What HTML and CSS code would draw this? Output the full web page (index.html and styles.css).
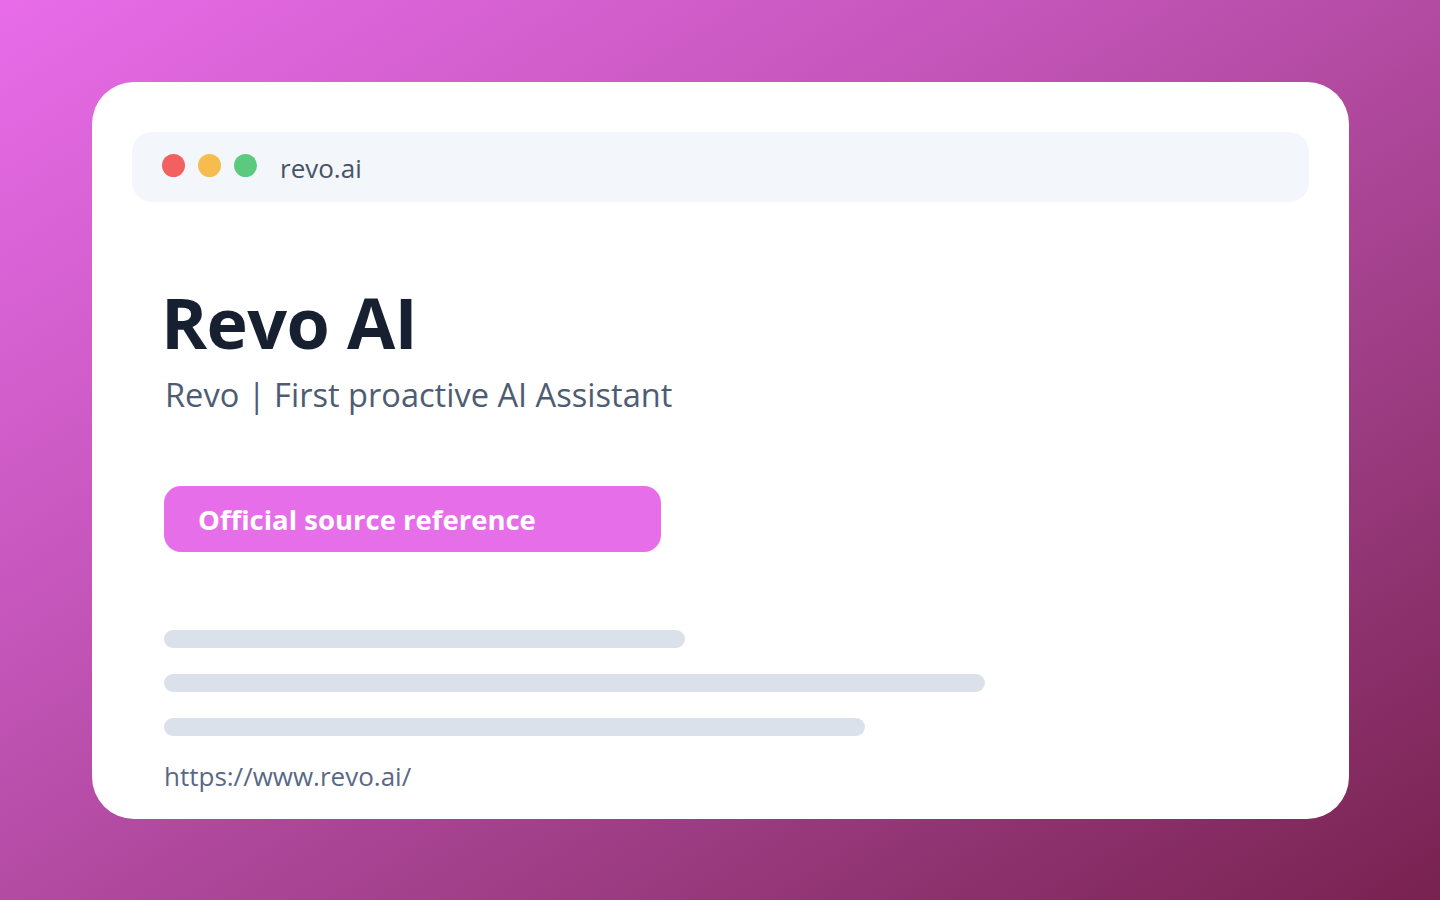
FILE: index.html
```html
<!DOCTYPE html>
<html lang="en">
<head>
<meta charset="utf-8">
<title>Revo AI</title>
<link rel="stylesheet" href="styles.css">
</head>
<body>
<main class="stage">
  <section class="card">
    <header class="bar">
      <div class="dots">
        <span class="dot red"></span>
        <span class="dot yellow"></span>
        <span class="dot green"></span>
      </div>
      <span class="domain">revo.ai</span>
    </header>
    <div class="content">
      <h1 class="title">Revo AI</h1>
      <p class="subtitle">Revo | First proactive AI Assistant</p>
      <a class="button">Official source reference</a>
      <div class="lines">
        <span class="line l1"></span>
        <span class="line l2"></span>
        <span class="line l3"></span>
      </div>
      <p class="url">https://www.revo.ai/</p>
    </div>
  </section>
</main>
</body>
</html>
```

FILE: styles.css
```css
* { box-sizing: border-box; }
html, body { margin: 0; padding: 0; }
body {
  width: 1440px;
  height: 900px;
  overflow: hidden;
  font-family: "Open Sans", "Noto Sans", sans-serif;
  background: linear-gradient(148deg, #e86ce9 0%, #c556bb 35%, #9c3c82 70%, #782250 100%);
}
.stage {
  height: 900px;
  padding: 82px 91px 81px 92px;
}
.card {
  background: #ffffff;
  border-radius: 42px;
  height: 737px;
  padding: 50px 40px 0 40px;
  overflow: hidden;
}
.bar {
  height: 70px;
  background: #f3f6fb;
  border-radius: 20px;
  display: flex;
  align-items: center;
  padding: 0 30px;
  gap: 23px;
}
.dots { display: flex; gap: 13px; margin-top: -4px; }
.dot { width: 23px; height: 23px; border-radius: 50%; display: block; }
.red { background: #f26060; }
.yellow { background: #f6bd4e; }
.green { background: #5bca7e; }
.domain {
  font-size: 26px;
  color: #465365;
  margin-top: 1px;
}
.content { padding: 0 32px; }
.title {
  margin: 82px 0 0 -3px;
  font-size: 70px;
  line-height: 1.1;
  font-weight: 700;
  color: #172030;
  letter-spacing: -0.6px;
}
.subtitle {
  margin: 13px 0 0 1px;
  font-size: 32.6px;
  line-height: 1.3;
  color: #4e5c73;
}
.button {
  display: flex;
  align-items: center;
  width: 497px;
  height: 66px;
  margin-top: 70px;
  padding: 0 34px;
  border-radius: 17px;
  background: #e66fe9;
  color: #ffffff;
  font-size: 27.5px;
  font-weight: 700;
}
.lines {
  display: flex;
  flex-direction: column;
  gap: 26px;
  margin-top: 78px;
}
.line { display: block; height: 18px; border-radius: 9px; background: #dbe1ea; }
.l1 { width: 521px; }
.l2 { width: 821px; }
.l3 { width: 701px; }
.url {
  margin: 24px 0 0 0;
  font-size: 26px;
  line-height: 1.3;
  color: #596885;
}
```
